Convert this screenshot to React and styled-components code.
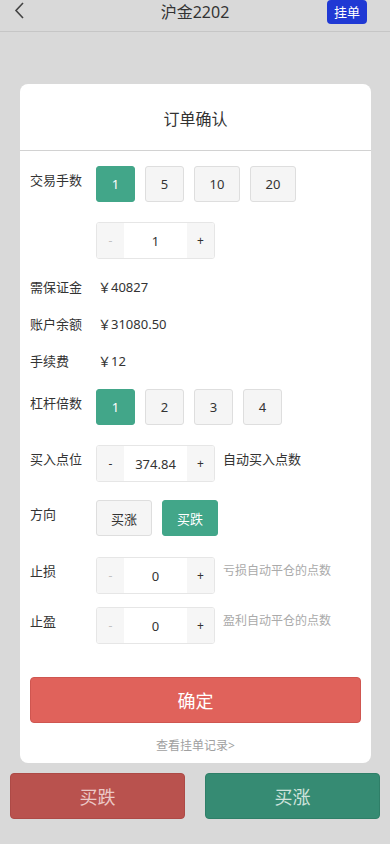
import React from "react";
import styled, { createGlobalStyle } from "styled-components";

const Global = createGlobalStyle`
  html, body { margin: 0; padding: 0; background: #d9d9d9; }
  body { font-family: "Noto Sans", "Noto Sans CJK SC", sans-serif; color: #333; }
  * { box-sizing: border-box; }
`;

const Page = styled.div`
  width: 390px;
  min-height: 844px;
  background: #d9d9d9;
  display: flex;
  flex-direction: column;
`;

const Header = styled.div`
  height: 32px;
  padding: 0 23px 8px 14px;
  display: flex;
  align-items: center;
  justify-content: space-between;
  border-bottom: 1px solid #c6c6c6;
  position: relative;
`;

const Title = styled.div`
  position: absolute;
  left: 0;
  right: 0;
  top: 0;
  height: 24px;
  line-height: 24px;
  text-align: center;
  font-size: 16px;
  color: #333;
  pointer-events: none;
`;

const BackIcon = styled.svg`
  width: 12px;
  height: 18px;
  margin-top: -3px;
`;

const HangButton = styled.div`
  width: 40px;
  height: 24px;
  border-radius: 4px;
  background: #2039d4;
  color: #fff;
  font-size: 13px;
  line-height: 24px;
  text-align: center;
`;

const Modal = styled.div`
  margin: 52px 19px 0 20px;
  background: #fff;
  border-radius: 8px;
  display: flex;
  flex-direction: column;
  padding-bottom: 8px;
`;

const ModalTitle = styled.div`
  height: 67px;
  line-height: 70px;
  text-align: center;
  font-size: 16px;
  color: #333;
  border-bottom: 1px solid #d2d2d2;
`;

const Form = styled.div`
  padding: 0 10px;
  display: flex;
  flex-direction: column;
`;

const Row = styled.div`
  display: flex;
  align-items: flex-start;
  margin-top: ${(p) => p.$mt || 0}px;
`;

const Label = styled.div`
  width: 66px;
  flex-shrink: 0;
  font-size: 13px;
  line-height: 28px;
  color: #333;
`;

const InfoRow = styled.div`
  display: flex;
  align-items: center;
  height: 37px;
  font-size: 13px;
  color: #333;
  margin-top: ${(p) => p.$mt || 0}px;
`;

const InfoLabel = styled.div`
  width: 66px;
  flex-shrink: 0;
`;

const Value = styled.div`
  padding-left: 2px;
`;

const Options = styled.div`
  display: flex;
  gap: 10px;
`;

const Option = styled.div`
  height: 36px;
  min-width: ${(p) => p.$w || 39}px;
  padding: 0 12px;
  display: flex;
  align-items: center;
  justify-content: center;
  border-radius: 3px;
  font-size: 13px;
  background: ${(p) => (p.$active ? "#42a689" : "#f5f5f5")};
  border: 1px solid ${(p) => (p.$active ? "#42a689" : "#dedede")};
  color: ${(p) => (p.$active ? "#fff" : "#333")};
`;

const Stepper = styled.div`
  display: flex;
  width: 119px;
  height: 37px;
  border: 1px solid #e6e6e6;
  border-radius: 3px;
  overflow: hidden;
  flex-shrink: 0;
`;

const StepBtn = styled.div`
  width: 27px;
  background: #f6f6f6;
  display: flex;
  align-items: center;
  justify-content: center;
  font-size: 12px;
  color: ${(p) => (p.$disabled ? "#c2c2c2" : "#333")};
`;

const StepValue = styled.div`
  flex: 1;
  background: #fff;
  display: flex;
  align-items: center;
  justify-content: center;
  font-size: 13px;
  color: #333;
`;

const Hint = styled.div`
  margin-left: 8px;
  line-height: 28px;
  font-size: ${(p) => (p.$muted ? 12 : 13)}px;
  color: ${(p) => (p.$muted ? "#aaa" : "#333")};
  white-space: nowrap;
`;

const Confirm = styled.div`
  margin: 33px 10px 0;
  height: 46px;
  border-radius: 4px;
  background: #e0625b;
  border: 1px solid #cf5650;
  color: #fff;
  font-size: 18px;
  display: flex;
  align-items: center;
  justify-content: center;
`;

const RecordLink = styled.div`
  margin-top: 14px;
  text-align: center;
  font-size: 12px;
  color: #a0a0a0;
  line-height: 18px;
`;

const BottomBar = styled.div`
  display: flex;
  gap: 20px;
  padding: 10px 10px 0;
`;

const BigButton = styled.div`
  flex: 1;
  height: 46px;
  border-radius: 4px;
  display: flex;
  align-items: center;
  justify-content: center;
  font-size: 18px;
  background: ${(p) => (p.$up ? "#368b73" : "#b9524e")};
  border: 1px solid ${(p) => (p.$up ? "#2f7f68" : "#ad4a46")};
  color: ${(p) => (p.$up ? "#cfe3dc" : "#ecc9c7")};
`;

function StepInput({ value, minusDisabled }) {
  return (
    <Stepper>
      <StepBtn $disabled={minusDisabled}>-</StepBtn>
      <StepValue>{value}</StepValue>
      <StepBtn>+</StepBtn>
    </Stepper>
  );
}

export default function App() {
  return (
    <Page>
      <Global />
      <Header>
        <BackIcon viewBox="0 0 12 18">
          <polyline points="9,2 2,9.5 9,17" fill="none" stroke="#444" strokeWidth="1.6" />
        </BackIcon>
        <Title>沪金2202</Title>
        <HangButton>挂单</HangButton>
      </Header>

      <Modal>
        <ModalTitle>订单确认</ModalTitle>
        <Form>
          <Row $mt={15}>
            <Label>交易手数</Label>
            <Options>
              <Option $active>1</Option>
              <Option>5</Option>
              <Option $w={46}>10</Option>
              <Option $w={46}>20</Option>
            </Options>
          </Row>
          <Row $mt={20}>
            <Label />
            <StepInput value="1" minusDisabled />
          </Row>
          <InfoRow $mt={9}>
            <InfoLabel>需保证金</InfoLabel>
            <Value>￥40827</Value>
          </InfoRow>
          <InfoRow>
            <InfoLabel>账户余额</InfoLabel>
            <Value>￥31080.50</Value>
          </InfoRow>
          <InfoRow>
            <InfoLabel>手续费</InfoLabel>
            <Value>￥12</Value>
          </InfoRow>
          <Row $mt={10}>
            <Label>杠杆倍数</Label>
            <Options>
              <Option $active>1</Option>
              <Option>2</Option>
              <Option>3</Option>
              <Option>4</Option>
            </Options>
          </Row>
          <Row $mt={20}>
            <Label>买入点位</Label>
            <StepInput value="374.84" />
            <Hint>自动买入点数</Hint>
          </Row>
          <Row $mt={18}>
            <Label>方向</Label>
            <Options>
              <Option $w={56}>买涨</Option>
              <Option $w={56} $active>买跌</Option>
            </Options>
          </Row>
          <Row $mt={21}>
            <Label>止损</Label>
            <StepInput value="0" minusDisabled />
            <Hint $muted>亏损自动平仓的点数</Hint>
          </Row>
          <Row $mt={13}>
            <Label>止盈</Label>
            <StepInput value="0" minusDisabled />
            <Hint $muted>盈利自动平仓的点数</Hint>
          </Row>
        </Form>
        <Confirm>确定</Confirm>
        <RecordLink>查看挂单记录&gt;</RecordLink>
      </Modal>

      <BottomBar>
        <BigButton>买跌</BigButton>
        <BigButton $up>买涨</BigButton>
      </BottomBar>
    </Page>
  );
}
